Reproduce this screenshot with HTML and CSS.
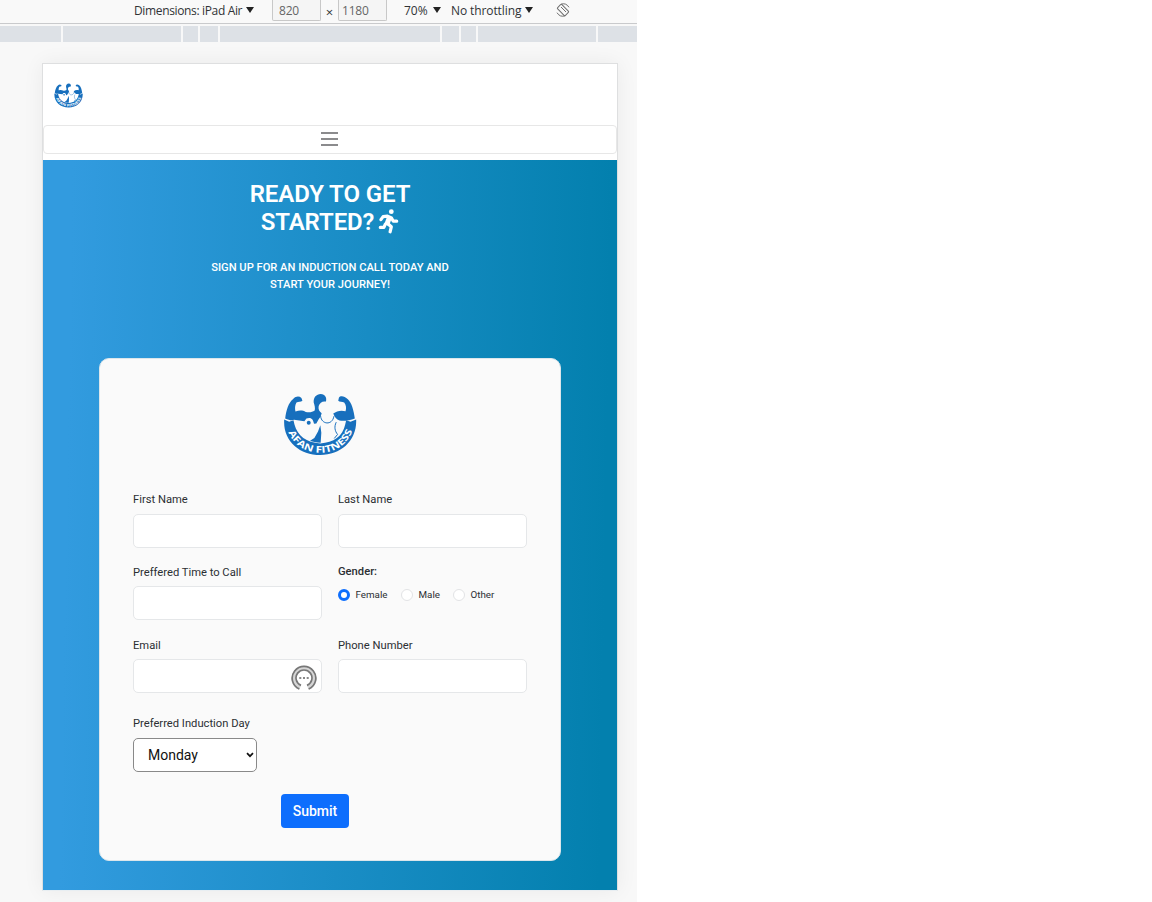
FILE: index.html
```html
<!DOCTYPE html>
<html lang="en">
<head>
<meta charset="utf-8">
<title>Afan Fitness</title>
<link rel="stylesheet" href="styles.css">
</head>
<body>
<svg class="defs" aria-hidden="true">
  <symbol id="logo" viewBox="24 24 222 190">
    <path fill="#176fbd" d="M30 101C33 76 40 53 54 42C63 33 72 33 79 39L82 47C77 52 70 49 64 53C59 62 59 71 61 80C74 75 84 77 92 81C102 84 112 82 119 77C121 70 119 62 116 53C115 36 124 28 137 27C151 28 156 38 153 50C143 47 134 54 131 63C129 72 133 80 140 85L137 95L131 103L124 116L117 117C114 99 104 97 94 101L88 109L57 105C50 108 42 106 30 101Z"/>
    <path fill="#176fbd" d="M240 101C237 76 230 53 219 43C208 32 196 32 192 38L190 47C194 52 202 49 208 53C214 61 215 70 212 79C199 75 185 78 175 86C179 98 185 103 194 107C208 110 225 106 240 101Z"/>
    <path fill="#176fbd" d="M27 104L42 111L55 106L58 119C67 153 94 174 136 176C176 174 204 154 211 119L214 106L227 111L244 104C247 168 198 211 136 211C73 211 23 168 27 104Z"/>
    <path fill="#176fbd" d="M136 121L139 144L137 174C124 174 112 171 105 168L118 160L129 140Z"/>
    <path fill="none" stroke="#176fbd" stroke-width="3" d="M137 94C139 119 172 123 177 94M184 112C177 126 180 139 188 149L178 161"/>
    <circle cx="101" cy="114" r="6" fill="#176fbd"/>
    <path id="ring-line" fill="none" d="M35 124C44 174 88 204 136 204C184 204 228 174 237 120"/>
    <text class="logo-text"><textPath href="#ring-line" startOffset="50%" text-anchor="middle" textLength="246" lengthAdjust="spacingAndGlyphs">AFAN FITNESS</textPath></text>
  </symbol>
</svg>
<div class="devtools">
  <div class="toolbar">
    <span class="dims">Dimensions: iPad Air</span><i class="tri"></i>
    <span class="size size-w">820</span><span class="times">×</span><span class="size size-h">1180</span>
    <span class="zoom">70%</span><i class="tri"></i>
    <span class="throttle">No throttling</span><i class="tri"></i>
    <svg class="rotate" viewBox="0 0 14 14" fill="none" stroke="#6e6e6e"><rect x="4" y="1.5" width="6" height="11" rx="1" transform="rotate(-45 7 7)"/><path d="M5 1.2Q10-.5 13 4.3M9 12.8Q4 14.5 1 9.7M5 4L10 9"/></svg>
  </div>
  <div class="ruler"><i class="r1"></i><i class="r2"></i><i class="r3"></i><i class="r4"></i><i class="r5"></i><i class="r6"></i><i class="r7"></i><i class="r8"></i><i class="r9"></i></div>
  <div class="stage">
    <main class="device">
      <header class="nav">
        <svg class="brand"><use href="#logo"/></svg>
        <button class="toggler" aria-label="Menu"><i></i><i></i><i></i></button>
      </header>
      <section class="hero">
        <h1>READY TO GET<br>STARTED?<svg class="runner" viewBox="0 0 20 25" fill="none" stroke="#fff" stroke-linecap="round" stroke-linejoin="round"><circle cx="12.8" cy="2.7" r="2.4" fill="#fff" stroke="none"/><path stroke-width="3.2" d="M2.4 10.6L4.6 7.6L9 7.2L13 9L14.8 12.2L18.2 12.2M6.8 15.2L5.4 18.4L1.8 18.4M9.7 15L12.8 17.8L11.6 22.8"/><path stroke-width="5" d="M10.6 9.3L8.9 13.8"/></svg></h1>
        <p>SIGN UP FOR AN INDUCTION CALL TODAY AND<br>START YOUR JOURNEY!</p>
        <form class="card">
          <svg class="card-logo"><use href="#logo"/></svg>
          <div class="grid">
            <label class="field">First Name<input type="text"></label>
            <label class="field">Last Name<input type="text"></label>
            <label class="field">Preffered Time to Call<input type="text"></label>
            <div class="gender">
              <strong>Gender:</strong>
              <div class="radios">
                <label class="female"><i class="radio on"></i>Female</label>
                <label class="male"><i class="radio"></i>Male</label>
                <label><i class="radio"></i>Other</label>
              </div>
            </div>
            <label class="field">Email
              <span class="box"><svg class="filler" viewBox="0 0 26 26" fill="none"><path stroke="#d6d6d6" stroke-width="4" d="M9 23A10.5 10.5 0 1 1 17 23"/><path stroke="#777" stroke-width="1.7" d="M8.3 24A11.8 11.8 0 1 1 17.7 24M10 20.4A8 8 0 1 1 16 20.4"/><path stroke="#888" stroke-width="2" d="M8.3 13h2M12 13h2M15.7 13h2"/></svg></span>
            </label>
            <label class="field">Phone Number<input type="text"></label>
          </div>
          <div class="day">Preferred Induction Day
            <div class="select"><span>Monday</span><svg viewBox="0 0 8 6" fill="none" stroke="#111" stroke-width="1.7"><path d="M1 1.2L4 4.2L7 1.2"/></svg></div>
          </div>
          <button class="submit" type="button">Submit</button>
        </form>
      </section>
    </main>
  </div>
</div>
</body>
</html>
```
FILE: styles.css
```css
* { box-sizing: border-box; }
body { margin: 0; background: #fff; font-family: Roboto, sans-serif; color: #212529; overflow: hidden; }
.defs { position: absolute; width: 0; height: 0; overflow: visible; }
.logo-text { font: 700 28px "Open Sans", sans-serif; fill: #fff; }
.devtools { width: 637px; height: 902px; background: #f8f8f8; overflow: hidden; }

.toolbar { height: 24px; display: flex; align-items: flex-start; padding-left: 134px; border-bottom: 1px solid #c9cacc; background: #f9f9f9; font: 12px/21px "Open Sans", sans-serif; color: #303336; white-space: nowrap; }
.toolbar span { flex: none; }
.dims { width: 112px; letter-spacing: -.35px; }
.tri { width: 8px; height: 6px; margin-top: 7px; background: #222; clip-path: polygon(0 0, 100% 0, 50% 100%); flex: none; }
.size { height: 21px; border: 1px solid #c8c8c8; border-top: 0; background: #f5f5f5; color: #666; border-radius: 0 0 2px 2px; letter-spacing: -.2px; }
.size-w { width: 49px; margin-left: 18px; padding-left: 6px; }
.size-h { width: 49px; padding-left: 3px; }
.times { width: 17px; text-align: center; line-height: 24px; font-size: 13px; }
.zoom { width: 29px; margin-left: 17px; }
.throttle { width: 74px; margin-left: 10px; letter-spacing: -.1px; }
.rotate { width: 14px; height: 14px; margin: 3px 0 0 23px; }

.ruler { height: 18px; display: flex; gap: 2px; padding: 2px 0 0; background: #f8f8f8; }
.ruler i { height: 16px; background: #dde1e6; }
.r1 { width: 61px; }
.r2 { width: 118px; }
.r3 { width: 15px; }
.r4 { width: 18px; }
.r5 { width: 220px; }
.r6 { width: 17px; }
.r7 { width: 15px; }
.r8 { width: 118px; }
.r9 { flex: 1; }

.stage { padding: 21px 19px 0 42px; }
.device { height: 828px; border: 1px solid #dedfe0; border-bottom-color: #e8eef2; box-shadow: 0 0 20px rgba(0, 0, 0, .06); background: #fff; }
.nav { height: 96px; display: flex; flex-direction: column; }
.brand { width: 29px; height: 25px; margin: 19px 0 17px 11px; }
.toggler { width: 574px; height: 29px; border: 1px solid #e7e7e7; border-radius: 4px; background: #fff; padding: 0 1px 1px 0; display: flex; flex-direction: column; align-items: center; justify-content: center; gap: 4px; }
.toggler i { width: 17px; height: 2px; background: #8b8b8d; }

.hero { height: 730px; display: flex; flex-direction: column; align-items: center; background: linear-gradient(91deg, #329bdf 5%, #0380ae 97%); color: #fff; text-align: center; }
h1 { margin: 20px 0 0; font-size: 24px; line-height: 28px; font-weight: 600; height: 56px; letter-spacing: -.1px; }
.runner { width: 21px; height: 25px; margin-left: 4px; vertical-align: -4px; }
.hero p { margin: 23px 0 0; font-size: 11.15px; line-height: 17px; font-weight: 500; }

.card { width: 462px; height: 503px; margin-top: 65px; padding: 0 34px; background: #fafafa; border: 1px solid #dce6eb; border-radius: 10px; color: #2b2f33; text-align: left; font-size: 11.2px; display: flex; flex-direction: column; }
.card-logo { width: 74px; height: 63px; margin: 34px 0 0 149px; flex: none; }
.grid { margin: 35px 0 0 -1px; display: grid; grid-template-columns: 189px 189px; column-gap: 16px; grid-auto-rows: 73px; }
.field { display: block; line-height: 17px; }
.field input, .box { display: block; width: 189px; height: 34px; margin-top: 5.5px; border: 1px solid #e5e7e9; border-radius: 5px; background: #fff; }
.box { display: flex; align-items: center; justify-content: flex-end; padding-right: 4px; margin-top: 5px; }
.field:nth-child(n+3) input { margin-top: 5px; }
.filler { width: 26px; height: 26px; margin-top: 3px; }
.gender strong { display: block; font-weight: 500; line-height: 15px; }
.radios { display: flex; margin-top: 8.5px; font-size: 9.8px; line-height: 14px; }
.radios label { display: flex; align-items: center; gap: 5.5px; }
.female { width: 63px; }
.male { width: 52px; }
.radio { width: 12px; height: 12px; border: 1px solid #e2e3e5; border-radius: 50%; background: #fff; }
.radio.on { border: 3px solid #0d6efd; }
.day { margin: 5px 0 0 -1px; line-height: 17px; }
.select { width: 124px; height: 34px; margin-top: 6px; border: 1px solid #898989; border-radius: 5px; background: #fff; display: flex; align-items: center; justify-content: space-between; padding: 0 2px 0 14px; font-size: 14px; color: #111; }
.select svg { width: 8px; height: 6px; }
.submit { width: 68px; height: 34px; margin: 22px 0 0 147px; border: 0; border-radius: 4px; background: #0d6efd; color: #fff; font: 500 14px Roboto, sans-serif; padding: 0; flex: none; }
```
